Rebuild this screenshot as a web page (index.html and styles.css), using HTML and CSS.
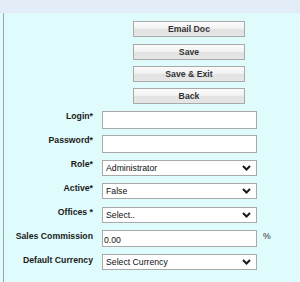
FILE: index.html
```html
<!DOCTYPE html>
<html>
<head>
<meta charset="utf-8">
<link rel="stylesheet" href="styles.css">
</head>
<body>
<div class="top"></div>
<div class="main">
  <div class="buttons">
    <button class="btn first">Email Doc</button>
    <button class="btn">Save</button>
    <button class="btn">Save &amp; Exit</button>
    <button class="btn">Back</button>
  </div>
  <div class="form">
    <label class="lbl">Login*</label>
    <input class="inp" type="text">
    <span></span>

    <label class="lbl">Password*</label>
    <input class="inp" type="password">
    <span></span>

    <label class="lbl">Role*</label>
    <div class="sel sel-role"><select><option>Administrator</option></select><svg class="chev" width="9" height="6" viewBox="0 0 9 6"><path d="M1 1 L4.5 4.5 L8 1" fill="none" stroke="#1a1a1a" stroke-width="2"/></svg></div>
    <span></span>

    <label class="lbl">Active*</label>
    <div class="sel"><select><option>False</option></select><svg class="chev" width="9" height="6" viewBox="0 0 9 6"><path d="M1 1 L4.5 4.5 L8 1" fill="none" stroke="#1a1a1a" stroke-width="2"/></svg></div>
    <span></span>

    <label class="lbl">Offices *</label>
    <div class="sel"><select><option>Select..</option></select><svg class="chev" width="9" height="6" viewBox="0 0 9 6"><path d="M1 1 L4.5 4.5 L8 1" fill="none" stroke="#1a1a1a" stroke-width="2"/></svg></div>
    <span></span>

    <label class="lbl">Sales Commission</label>
    <input class="inp inp-sc" type="text" value="0.00">
    <span class="pct">%</span>

    <label class="lbl">Default Currency</label>
    <div class="sel sel-cur"><select><option>Select Currency</option></select><svg class="chev" width="9" height="6" viewBox="0 0 9 6"><path d="M1 1 L4.5 4.5 L8 1" fill="none" stroke="#1a1a1a" stroke-width="2"/></svg></div>
    <span></span>
  </div>
</div>
</body>
</html>
```
FILE: styles.css
```css
html, body {
  margin: 0;
  padding: 0;
}
body {
  width: 300px;
  height: 282px;
  overflow: hidden;
  background: #dffbfb;
  font-family: "Liberation Sans", Arial, sans-serif;
  font-size: 8.7px;
  color: #1a1a1a;
}
.top {
  height: 13px;
  background: #e3edf8;
}
.main {
  margin-left: 3px;
  border-left: 1px solid #9fa8a8;
  height: 269px;
  box-sizing: border-box;
}
.buttons {
  display: flex;
  flex-direction: column;
  align-items: flex-start;
  gap: 6px;
  padding: 8px 0 0 129px;
}
.btn {
  width: 112px;
  height: 16px;
  box-sizing: border-box;
  margin: 0;
  padding: 0;
  border: 1px solid #a9a9a9;
  background: linear-gradient(#fbfbfb 0%, #f2f2f2 45%, #e2e2e2 55%, #e6e6e6 100%);
  font-family: "Liberation Sans", Arial, sans-serif;
  font-size: 8.7px;
  font-weight: bold;
  color: #333;
  line-height: 14px;
}
.btn.first {
  margin-bottom: 1px;
}
.form {
  display: grid;
  grid-template-columns: 89px 155px auto;
  grid-auto-rows: 24px;
  column-gap: 9px;
  align-items: start;
  margin-top: 7px;
}
.lbl {
  text-align: right;
  font-weight: bold;
  line-height: 10px;
  color: #1a1a1a;
  white-space: nowrap;
}
.inp {
  width: 155px;
  height: 18px;
  box-sizing: border-box;
  margin: 0;
  border: 1px solid #a9a9a9;
  background: #fff;
  padding: 0 2px;
  font-family: "Liberation Sans", Arial, sans-serif;
  font-size: 8.7px;
  color: #111;
  outline: none;
}
.inp-sc {
  height: 17px;
  margin-top: -1px;
  padding-top: 2px;
  padding-left: 1px;
}
.sel {
  position: relative;
  width: 155px;
  height: 16px;
}
.sel-role {
  margin-top: 1px;
}
.sel-cur {
  margin-top: -1px;
}
.sel select {
  appearance: none;
  -webkit-appearance: none;
  width: 155px;
  height: 16px;
  box-sizing: border-box;
  margin: 0;
  border: 1px solid #a9a9a9;
  border-radius: 0;
  background: #fff;
  padding: 0 0 0 3px;
  font-family: "Liberation Sans", Arial, sans-serif;
  font-size: 8.7px;
  color: #111;
  outline: none;
}
.chev {
  position: absolute;
  right: 6px;
  top: 5px;
}
.pct {
  font-size: 8.7px;
  line-height: 10px;
  margin-left: -3px;
  padding-top: 0;
  color: #333;
}
```
